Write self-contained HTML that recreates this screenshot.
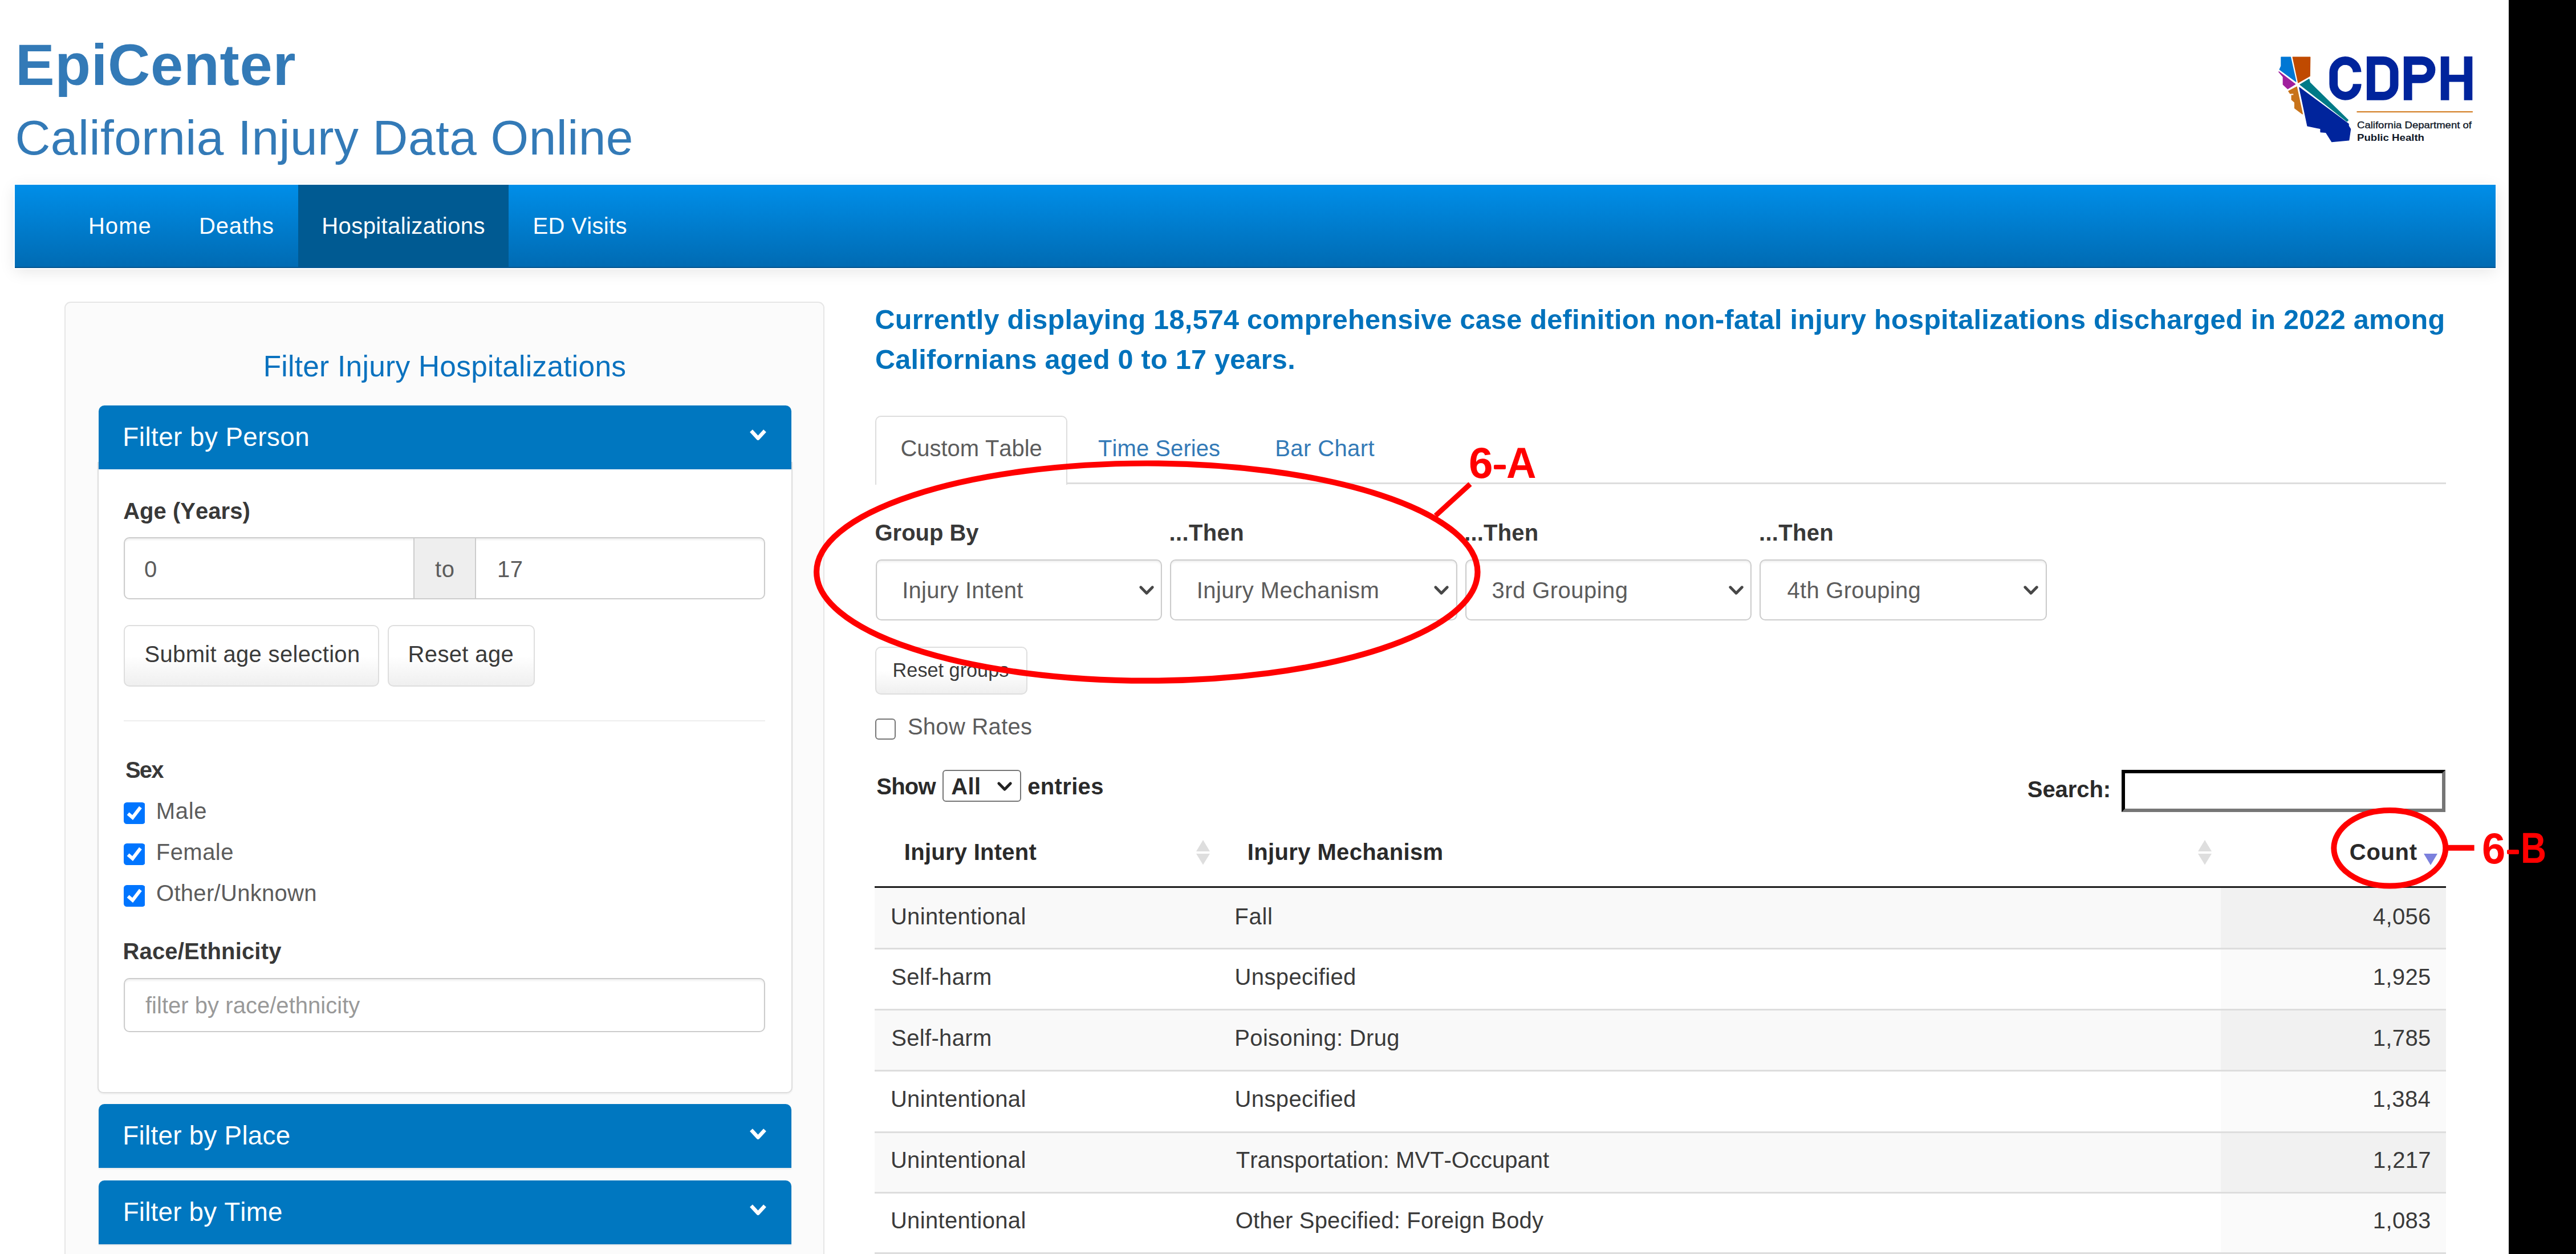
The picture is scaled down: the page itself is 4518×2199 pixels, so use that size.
<!DOCTYPE html>
<html><head><meta charset="utf-8"><style>
html,body{margin:0;padding:0;background:#fff;}
body{width:4518px;height:2199px;position:relative;overflow:hidden;font-family:"Liberation Sans",sans-serif;}
.t{position:absolute;white-space:pre;line-height:1;font-kerning:none;font-feature-settings:"kern" 0,"liga" 0;}
.b{position:absolute;}
</style></head><body>
<div class="t" style="left:26.92px;top:63.21px;font-size:102.86px;letter-spacing:0.727px;color:#337ab7;font-weight:700;">EpiCenter</div>
<div class="t" style="left:26.55px;top:198.63px;font-size:85.71px;letter-spacing:0.435px;color:#337ab7;">California Injury Data Online</div>
<div class="b" style="left:25.60px;top:323.80px;width:4351.40px;height:146.70px;background:linear-gradient(#008ee8,#006bb3);border-bottom:2.7px solid #00548f;box-sizing:border-box;box-shadow:0 0 0 2px #fff,0 6px 26px rgba(0,0,0,0.10);"></div>
<div class="b" style="left:523.20px;top:323.80px;width:369.20px;height:144.20px;background:#005a92;"></div>
<div class="t" style="left:154.92px;top:376.43px;font-size:40.00px;letter-spacing:1.053px;color:#fff;">Home</div>
<div class="t" style="left:349.02px;top:376.43px;font-size:40.00px;letter-spacing:0.838px;color:#fff;">Deaths</div>
<div class="t" style="left:564.32px;top:376.43px;font-size:40.00px;letter-spacing:0.399px;color:#fff;">Hospitalizations</div>
<div class="t" style="left:934.52px;top:376.43px;font-size:40.00px;letter-spacing:0.335px;color:#fff;">ED Visits</div>
<div class="b" style="left:112.80px;top:529.30px;width:1333.70px;height:1730.70px;background:#fbfbfb;border:2.5px solid #e6e6e6;border-radius:11px;box-sizing:border-box;"></div>
<div class="t" style="left:461.68px;top:617.45px;font-size:51.43px;letter-spacing:0.261px;color:#0a72bf;">Filter Injury Hospitalizations</div>
<div class="b" style="left:171.00px;top:810.00px;width:1218.50px;height:1107.00px;background:#fff;border:2.5px solid #ddd;border-top:none;border-radius:0 0 10px 10px;box-sizing:border-box;box-shadow:0 2px 3px rgba(0,0,0,0.05);"></div>
<div class="b" style="left:172.50px;top:710.50px;width:1215.00px;height:112.80px;background:#0077c0;border-radius:10px 10px 0 0;"></div>
<div class="t" style="left:215.35px;top:744.30px;font-size:45.71px;letter-spacing:0.482px;color:#fff;">Filter by Person</div>
<svg class="b" style="left:1311.10px;top:749.40px" width="37.00" height="26.00"><polyline points="6.50,6.50 18.50,19.50 30.50,6.50" fill="none" stroke="#fff" stroke-width="6.5" stroke-linecap="butt" stroke-linejoin="round"/></svg>
<div class="t" style="left:216.20px;top:875.73px;font-size:40.00px;letter-spacing:0.028px;color:#383838;font-weight:700;">Age (Years)</div>
<div class="b" style="left:216.90px;top:941.60px;width:1125.50px;height:109.50px;background:#fff;border:2.5px solid #ccc;border-radius:10px;box-sizing:border-box;box-shadow:inset 0 3px 3px rgba(0,0,0,0.06);"></div>
<div class="b" style="left:724.50px;top:941.60px;width:110.50px;height:109.50px;background:#eee;border:2.5px solid #ccc;box-sizing:border-box;"></div>
<div class="t" style="left:252.94px;top:977.83px;font-size:40.00px;letter-spacing:0.287px;color:#5c5c5c;">0</div>
<div class="t" style="left:763.07px;top:977.83px;font-size:40.00px;letter-spacing:0.466px;color:#5c5c5c;">to</div>
<div class="t" style="left:871.95px;top:977.83px;font-size:40.00px;letter-spacing:0.592px;color:#5c5c5c;">17</div>
<div class="b" style="left:217.20px;top:1095.70px;width:448.10px;height:108.00px;background:linear-gradient(#fff 0%,#fff 50%,#efefef 100%);border:2.5px solid #dedede;border-radius:10px;box-sizing:border-box;"></div>
<div class="t" style="left:253.48px;top:1127.23px;font-size:40.00px;letter-spacing:0.336px;color:#3a3a3a;">Submit age selection</div>
<div class="b" style="left:679.70px;top:1095.70px;width:258.50px;height:108.00px;background:linear-gradient(#fff 0%,#fff 50%,#efefef 100%);border:2.5px solid #dedede;border-radius:10px;box-sizing:border-box;"></div>
<div class="t" style="left:715.52px;top:1127.23px;font-size:40.00px;letter-spacing:0.364px;color:#3a3a3a;">Reset age</div>
<div class="b" style="left:216.60px;top:1262.70px;width:1125.80px;height:2.50px;background:#eee;"></div>
<div class="t" style="left:220.05px;top:1329.63px;font-size:40.00px;letter-spacing:-1.913px;color:#383838;font-weight:700;">Sex</div>
<svg class="b" style="left:216.50px;top:1406.80px" width="37.8" height="38"><rect x="0" y="0" width="37.8" height="38" rx="5.5" fill="#0075ff"/><polyline points="7.6,19.8 15.6,26.6 29.4,8.6" fill="none" stroke="#fff" stroke-width="6"/></svg>
<div class="t" style="left:273.72px;top:1401.73px;font-size:40.00px;letter-spacing:0.720px;color:#5c5c5c;">Male</div>
<svg class="b" style="left:216.50px;top:1479.25px" width="37.8" height="38"><rect x="0" y="0" width="37.8" height="38" rx="5.5" fill="#0075ff"/><polyline points="7.6,19.8 15.6,26.6 29.4,8.6" fill="none" stroke="#fff" stroke-width="6"/></svg>
<div class="t" style="left:273.72px;top:1474.03px;font-size:40.00px;letter-spacing:0.476px;color:#5c5c5c;">Female</div>
<svg class="b" style="left:216.50px;top:1551.70px" width="37.8" height="38"><rect x="0" y="0" width="37.8" height="38" rx="5.5" fill="#0075ff"/><polyline points="7.6,19.8 15.6,26.6 29.4,8.6" fill="none" stroke="#fff" stroke-width="6"/></svg>
<div class="t" style="left:274.01px;top:1546.33px;font-size:40.00px;letter-spacing:0.299px;color:#5c5c5c;">Other/Unknown</div>
<div class="t" style="left:215.42px;top:1647.93px;font-size:40.00px;letter-spacing:0.180px;color:#383838;font-weight:700;">Race/Ethnicity</div>
<div class="b" style="left:217.10px;top:1715.00px;width:1124.90px;height:95.40px;background:#fff;border:2.5px solid #ccc;border-radius:10px;box-sizing:border-box;box-shadow:inset 0 3px 3px rgba(0,0,0,0.06);"></div>
<div class="t" style="left:254.93px;top:1742.83px;font-size:40.00px;letter-spacing:0.032px;color:#999;">filter by race/ethnicity</div>
<div class="b" style="left:172.50px;top:1936.00px;width:1215.00px;height:112.40px;background:#0077c0;border-radius:10px 10px 0 0;box-shadow:0 2px 3px rgba(0,0,0,0.08);"></div>
<div class="t" style="left:215.35px;top:1969.10px;font-size:45.71px;letter-spacing:0.304px;color:#fff;">Filter by Place</div>
<svg class="b" style="left:1311.10px;top:1975.20px" width="37.00" height="26.00"><polyline points="6.50,6.50 18.50,19.50 30.50,6.50" fill="none" stroke="#fff" stroke-width="6.5" stroke-linecap="butt" stroke-linejoin="round"/></svg>
<div class="b" style="left:172.50px;top:2069.50px;width:1215.00px;height:112.00px;background:#0077c0;border-radius:10px 10px 0 0;box-shadow:0 2px 3px rgba(0,0,0,0.08);"></div>
<div class="t" style="left:215.65px;top:2102.60px;font-size:45.71px;letter-spacing:0.235px;color:#fff;">Filter by Time</div>
<svg class="b" style="left:1311.10px;top:2108.30px" width="37.00" height="26.00"><polyline points="6.50,6.50 18.50,19.50 30.50,6.50" fill="none" stroke="#fff" stroke-width="6.5" stroke-linecap="butt" stroke-linejoin="round"/></svg>
<div class="t" style="left:1534.51px;top:536.38px;font-size:48.57px;letter-spacing:0.267px;color:#0072bc;font-weight:700;">Currently displaying 18,574 comprehensive case definition non-fatal injury hospitalizations discharged in 2022 among</div>
<div class="t" style="left:1535.01px;top:605.88px;font-size:48.57px;letter-spacing:0.255px;color:#0072bc;font-weight:700;">Californians aged 0 to 17 years.</div>
<div class="b" style="left:1535.00px;top:846.00px;width:2755.00px;height:2.80px;background:#ddd;"></div>
<div class="b" style="left:1535.00px;top:729.00px;width:336.50px;height:121.00px;background:#fff;border:2.5px solid #ddd;border-bottom:none;border-radius:10px 10px 0 0;box-sizing:border-box;"></div>
<div class="t" style="left:1579.47px;top:766.33px;font-size:40.00px;letter-spacing:-0.061px;color:#5c5c5c;">Custom Table</div>
<div class="t" style="left:1926.10px;top:766.33px;font-size:40.00px;letter-spacing:0.056px;color:#337ab7;">Time Series</div>
<div class="t" style="left:2236.22px;top:766.33px;font-size:40.00px;letter-spacing:0.400px;color:#337ab7;">Bar Chart</div>
<div class="t" style="left:1534.56px;top:913.93px;font-size:40.00px;letter-spacing:-0.039px;color:#383838;font-weight:700;">Group By</div>
<div class="t" style="left:2050.59px;top:913.93px;font-size:40.00px;letter-spacing:0.351px;color:#383838;font-weight:700;">...Then</div>
<div class="t" style="left:2568.29px;top:913.93px;font-size:40.00px;letter-spacing:0.151px;color:#383838;font-weight:700;">...Then</div>
<div class="t" style="left:3084.99px;top:913.93px;font-size:40.00px;letter-spacing:0.301px;color:#383838;font-weight:700;">...Then</div>
<div class="b" style="left:1535.50px;top:980.50px;width:502.70px;height:107.50px;background:#fff;border:2.5px solid #ccc;border-radius:10px;box-sizing:border-box;box-shadow:inset 0 3px 3px rgba(0,0,0,0.06);"></div>
<div class="t" style="left:1582.21px;top:1015.13px;font-size:40.00px;letter-spacing:0.257px;color:#5c5c5c;">Injury Intent</div>
<svg class="b" style="left:1995.65px;top:1024.75px" width="30.10" height="20.10"><polyline points="4.80,4.80 15.05,15.30 25.30,4.80" fill="none" stroke="#474747" stroke-width="4.8" stroke-linecap="round" stroke-linejoin="round"/></svg>
<div class="b" style="left:2052.20px;top:980.50px;width:503.60px;height:107.50px;background:#fff;border:2.5px solid #ccc;border-radius:10px;box-sizing:border-box;box-shadow:inset 0 3px 3px rgba(0,0,0,0.06);"></div>
<div class="t" style="left:2098.71px;top:1015.13px;font-size:40.00px;letter-spacing:0.439px;color:#5c5c5c;">Injury Mechanism</div>
<svg class="b" style="left:2513.25px;top:1024.75px" width="30.10" height="20.10"><polyline points="4.80,4.80 15.05,15.30 25.30,4.80" fill="none" stroke="#474747" stroke-width="4.8" stroke-linecap="round" stroke-linejoin="round"/></svg>
<div class="b" style="left:2569.80px;top:980.50px;width:502.50px;height:107.50px;background:#fff;border:2.5px solid #ccc;border-radius:10px;box-sizing:border-box;box-shadow:inset 0 3px 3px rgba(0,0,0,0.06);"></div>
<div class="t" style="left:2616.48px;top:1015.13px;font-size:40.00px;letter-spacing:0.457px;color:#5c5c5c;">3rd Grouping</div>
<svg class="b" style="left:3029.75px;top:1024.75px" width="30.10" height="20.10"><polyline points="4.80,4.80 15.05,15.30 25.30,4.80" fill="none" stroke="#474747" stroke-width="4.8" stroke-linecap="round" stroke-linejoin="round"/></svg>
<div class="b" style="left:3086.00px;top:980.50px;width:503.70px;height:107.50px;background:#fff;border:2.5px solid #ccc;border-radius:10px;box-sizing:border-box;box-shadow:inset 0 3px 3px rgba(0,0,0,0.06);"></div>
<div class="t" style="left:3134.58px;top:1015.13px;font-size:40.00px;letter-spacing:0.266px;color:#5c5c5c;">4th Grouping</div>
<svg class="b" style="left:3547.15px;top:1024.75px" width="30.10" height="20.10"><polyline points="4.80,4.80 15.05,15.30 25.30,4.80" fill="none" stroke="#474747" stroke-width="4.8" stroke-linecap="round" stroke-linejoin="round"/></svg>
<div class="b" style="left:1534.90px;top:1133.70px;width:267.00px;height:84.10px;background:linear-gradient(#fff 0%,#fff 50%,#efefef 100%);border:2.5px solid #dedede;border-radius:10px;box-sizing:border-box;"></div>
<div class="t" style="left:1565.59px;top:1158.47px;font-size:34.29px;letter-spacing:-0.009px;color:#3a3a3a;">Reset groups</div>
<div class="b" style="left:1534.50px;top:1260.20px;width:36.30px;height:36.50px;background:#fff;border:2.5px solid #767676;border-radius:6px;box-sizing:border-box;"></div>
<div class="t" style="left:1591.88px;top:1254.43px;font-size:40.00px;letter-spacing:0.278px;color:#5c5c5c;">Show Rates</div>
<div class="t" style="left:1537.25px;top:1358.53px;font-size:40.00px;letter-spacing:-0.762px;color:#2a2a2a;font-weight:700;">Show</div>
<div class="b" style="left:1653.30px;top:1350.00px;width:137.50px;height:56.30px;background:#fff;border:2.8px solid #767676;border-radius:6px;box-sizing:border-box;"></div>
<div class="t" style="left:1668.30px;top:1358.53px;font-size:40.00px;letter-spacing:0.355px;color:#2a2a2a;font-weight:700;">All</div>
<svg class="b" style="left:1746.95px;top:1369.25px" width="30.10" height="20.10"><polyline points="4.80,4.80 15.05,15.30 25.30,4.80" fill="none" stroke="#222" stroke-width="4.8" stroke-linecap="round" stroke-linejoin="round"/></svg>
<div class="t" style="left:1802.24px;top:1358.53px;font-size:40.00px;letter-spacing:0.339px;color:#2a2a2a;font-weight:700;">entries</div>
<div class="t" style="left:3555.85px;top:1364.03px;font-size:40.00px;letter-spacing:-0.090px;color:#2a2a2a;font-weight:700;">Search:</div>
<div class="b" style="left:3721.40px;top:1350.40px;width:567.90px;height:73.90px;background:#fff;border:6px inset #767676;border-top-color:#000;border-left-color:#000;box-sizing:border-box;"></div>
<div class="t" style="left:1585.82px;top:1473.83px;font-size:40.00px;letter-spacing:0.265px;color:#2a2a2a;font-weight:700;">Injury Intent</div>
<div class="t" style="left:2187.82px;top:1473.83px;font-size:40.00px;letter-spacing:0.366px;color:#2a2a2a;font-weight:700;">Injury Mechanism</div>
<div class="t" style="left:4120.86px;top:1473.83px;font-size:40.00px;letter-spacing:0.655px;color:#2a2a2a;font-weight:700;">Count</div>
<svg class="b" style="left:2097.20px;top:1473px" width="26" height="44"><polygon points="1,20 13,0 25,20" fill="#dedede"/><polygon points="1,24 13,43.5 25,24" fill="#dedede"/></svg>
<svg class="b" style="left:3854.00px;top:1473px" width="26" height="44"><polygon points="1,20 13,0 25,20" fill="#dedede"/><polygon points="1,24 13,43.5 25,24" fill="#dedede"/></svg>
<svg class="b" style="left:4250.5px;top:1496.5px" width="24" height="20"><polygon points="0,0 24,0 12,20" fill="#7b80dd"/></svg>
<div class="b" style="left:1534.20px;top:1554.30px;width:2755.80px;height:3.10px;background:#1c1c1c;"></div>
<div class="b" style="left:1534.20px;top:1557.40px;width:2755.80px;height:104.60px;background:#f9f9f9;"></div>
<div class="b" style="left:3894.60px;top:1557.40px;width:395.40px;height:104.60px;background:#f1f1f1;"></div>
<div class="t" style="left:1561.91px;top:1586.73px;font-size:40.00px;letter-spacing:0.322px;color:#3a3a3a;">Unintentional</div>
<div class="t" style="left:2165.32px;top:1586.73px;font-size:40.00px;letter-spacing:0.735px;color:#3a3a3a;">Fall</div>
<div class="t" style="left:4161.80px;top:1586.73px;font-size:40.00px;letter-spacing:0.365px;color:#3a3a3a;">4,056</div>
<div class="b" style="left:1534.20px;top:1662.00px;width:2755.80px;height:107.20px;background:#fff;"></div>
<div class="b" style="left:3894.60px;top:1662.00px;width:395.40px;height:107.20px;background:#fafafa;"></div>
<div class="b" style="left:1534.20px;top:1661.50px;width:2755.80px;height:3.00px;background:#ddd;"></div>
<div class="t" style="left:1563.18px;top:1693.48px;font-size:40.00px;letter-spacing:0.334px;color:#3a3a3a;">Self-harm</div>
<div class="t" style="left:2165.51px;top:1693.48px;font-size:40.00px;letter-spacing:0.386px;color:#3a3a3a;">Unspecified</div>
<div class="t" style="left:4161.75px;top:1693.48px;font-size:40.00px;letter-spacing:0.358px;color:#3a3a3a;">1,925</div>
<div class="b" style="left:1534.20px;top:1769.20px;width:2755.80px;height:107.20px;background:#f9f9f9;"></div>
<div class="b" style="left:3894.60px;top:1769.20px;width:395.40px;height:107.20px;background:#f1f1f1;"></div>
<div class="b" style="left:1534.20px;top:1768.70px;width:2755.80px;height:3.00px;background:#ddd;"></div>
<div class="t" style="left:1563.18px;top:1800.23px;font-size:40.00px;letter-spacing:0.334px;color:#3a3a3a;">Self-harm</div>
<div class="t" style="left:2165.32px;top:1800.23px;font-size:40.00px;letter-spacing:0.332px;color:#3a3a3a;">Poisoning: Drug</div>
<div class="t" style="left:4161.75px;top:1800.23px;font-size:40.00px;letter-spacing:0.358px;color:#3a3a3a;">1,785</div>
<div class="b" style="left:1534.20px;top:1876.40px;width:2755.80px;height:107.70px;background:#fff;"></div>
<div class="b" style="left:3894.60px;top:1876.40px;width:395.40px;height:107.70px;background:#fafafa;"></div>
<div class="b" style="left:1534.20px;top:1875.90px;width:2755.80px;height:3.00px;background:#ddd;"></div>
<div class="t" style="left:1561.91px;top:1906.98px;font-size:40.00px;letter-spacing:0.322px;color:#3a3a3a;">Unintentional</div>
<div class="t" style="left:2165.51px;top:1906.98px;font-size:40.00px;letter-spacing:0.386px;color:#3a3a3a;">Unspecified</div>
<div class="t" style="left:4161.24px;top:1906.98px;font-size:40.00px;letter-spacing:0.360px;color:#3a3a3a;">1,384</div>
<div class="b" style="left:1534.20px;top:1984.10px;width:2755.80px;height:106.40px;background:#f9f9f9;"></div>
<div class="b" style="left:3894.60px;top:1984.10px;width:395.40px;height:106.40px;background:#f1f1f1;"></div>
<div class="b" style="left:1534.20px;top:1983.60px;width:2755.80px;height:3.00px;background:#ddd;"></div>
<div class="t" style="left:1561.91px;top:2013.73px;font-size:40.00px;letter-spacing:0.322px;color:#3a3a3a;">Unintentional</div>
<div class="t" style="left:2167.70px;top:2013.73px;font-size:40.00px;letter-spacing:0.014px;color:#3a3a3a;">Transportation: MVT-Occupant</div>
<div class="t" style="left:4162.09px;top:2013.73px;font-size:40.00px;letter-spacing:0.356px;color:#3a3a3a;">1,217</div>
<div class="b" style="left:1534.20px;top:2090.50px;width:2755.80px;height:106.20px;background:#fff;"></div>
<div class="b" style="left:3894.60px;top:2090.50px;width:395.40px;height:106.20px;background:#fafafa;"></div>
<div class="b" style="left:1534.20px;top:2090.00px;width:2755.80px;height:3.00px;background:#ddd;"></div>
<div class="t" style="left:1561.91px;top:2120.48px;font-size:40.00px;letter-spacing:0.322px;color:#3a3a3a;">Unintentional</div>
<div class="t" style="left:2166.71px;top:2120.48px;font-size:40.00px;letter-spacing:0.158px;color:#3a3a3a;">Other Specified: Foreign Body</div>
<div class="t" style="left:4161.83px;top:2120.48px;font-size:40.00px;letter-spacing:0.357px;color:#3a3a3a;">1,083</div>
<div class="b" style="left:1534.20px;top:2196.20px;width:2755.80px;height:3.60px;background:#ddd;"></div>
<svg class="b" style="left:0;top:0" width="4518" height="300">
<polygon points="4001,100.2 4017.3,100.2 4026.8,142.9 3998.3,121.8 4001,115.7" fill="#0077d4" stroke="#0077d4" stroke-width="1.5" stroke-linejoin="round"/>
<polygon points="4021.3,100.2 4051.6,100.2 4051.1,133.4 4030.8,144.9" fill="#c04a00" stroke="#c04a00" stroke-width="1.5" stroke-linejoin="round"/>
<polygon points="3996.9,125.9 4025.4,147.6 4012.5,155.7 4004.4,148.3 4004.4,134.7" fill="#a01f9d" stroke="#a01f9d" stroke-width="1.5" stroke-linejoin="round"/>
<polygon points="4013.9,159.8 4028.1,152.3 4038.3,199.8 4024.7,189.6 4024.7,179.4 4019.3,174.7 4019.3,167.2 4023,167 4023,163.5 4016.6,163.9" fill="#c8731a" stroke="#c8731a" stroke-width="1.5" stroke-linejoin="round"/>
<polygon points="4034.2,148.3 4049.8,138.8 4051.1,144.9 4118.2,210.6 4116.2,212.6" fill="#007a87" stroke="#007a87" stroke-width="1.5" stroke-linejoin="round"/>
<polygon points="4032.9,153.7 4119,217.4 4119,221 4122.5,226.5 4119.6,245.8 4089.8,248.6 4079.6,232.3 4070.1,231.6 4070.1,225.5 4047.1,220.8" fill="#00249c" stroke="#00249c" stroke-width="1.5" stroke-linejoin="round"/>
<g fill="none" stroke="#00249c" stroke-width="14.7">
<path d="M4134.15,125.8 V126.35 A21,21 0 0 0 4113.15,106.35 A21,21 0 0 0 4092.75,127.35 V147.35 A21,21 0 0 0 4113.15,168.35 A21,21 0 0 0 4134.15,147.35 V149.9"/>
<path d="M4158.35,106.35 H4180 A19.15,19.15 0 0 1 4199.15,125.5 V149.2 A19.15,19.15 0 0 1 4180,168.35 H4158.35 Z"/>
<path d="M4223.25,99 V175.7 M4223.25,106.35 H4248 A16,16 0 0 1 4264,122.35 A16,16 0 0 1 4248,138.35 H4223.25"/>
<path d="M4288.15,99 V175.7 M4328.95,99 V175.7"/>
</g>
<rect x="4288" y="131.1" width="41" height="12.5" fill="#00249c"/>
<rect x="4133.5" y="195" width="203.4" height="2.2" fill="#d4812a"/>
<text x="4134" y="225.3" font-family="Liberation Sans" font-size="17" fill="#101828" stroke="#101828" stroke-width="0.35" textLength="201" lengthAdjust="spacingAndGlyphs">California Department of</text>
<text x="4134" y="246.9" font-family="Liberation Sans" font-weight="700" font-size="17" fill="#101828" textLength="118" lengthAdjust="spacingAndGlyphs">Public Health</text>
</svg>
<div class="b" style="left:4400.00px;top:0.00px;width:118.00px;height:2199.00px;background:#000;"></div>
<svg class="b" style="left:0;top:0" width="4518" height="2199">
<ellipse cx="2011.8" cy="1003.1" rx="579.7" ry="190.6" fill="none" stroke="#ff0000" stroke-width="10.2"/>
<line x1="2517.9" y1="904.2" x2="2578.5" y2="848.9" stroke="#ff0000" stroke-width="9"/>
<ellipse cx="4191.3" cy="1487.3" rx="98" ry="66.3" fill="none" stroke="#ff0000" stroke-width="10"/>
<line x1="4293.5" y1="1486.8" x2="4339.6" y2="1486.8" stroke="#ff0000" stroke-width="10"/>
</svg>
<div class="t" style="left:2576.10px;top:774.44px;font-size:76.55px;color:#ff0000;font-weight:700;transform:scaleX(0.9971);transform-origin:2.80px 0">6</div>
<div class="b" style="left:2620.00px;top:814.80px;width:20.90px;height:8.10px;background:#ff0000;border-radius:2px;"></div>
<div class="t" style="left:2641.82px;top:774.93px;font-size:75.44px;color:#ff0000;font-weight:700;transform:scaleX(0.9642);transform-origin:1.88px 0">A</div>
<div class="t" style="left:4353.32px;top:1449.82px;font-size:75.99px;color:#ff0000;font-weight:700;transform:scaleX(0.9746);transform-origin:2.78px 0">6</div>
<div class="b" style="left:4396.70px;top:1490.00px;width:21.30px;height:7.80px;background:#ff0000;border-radius:2px;"></div>
<div class="t" style="left:4420.04px;top:1450.00px;font-size:75.58px;color:#ff0000;font-weight:700;transform:scaleX(0.8244);transform-origin:5.06px 0">B</div>
</body></html>
